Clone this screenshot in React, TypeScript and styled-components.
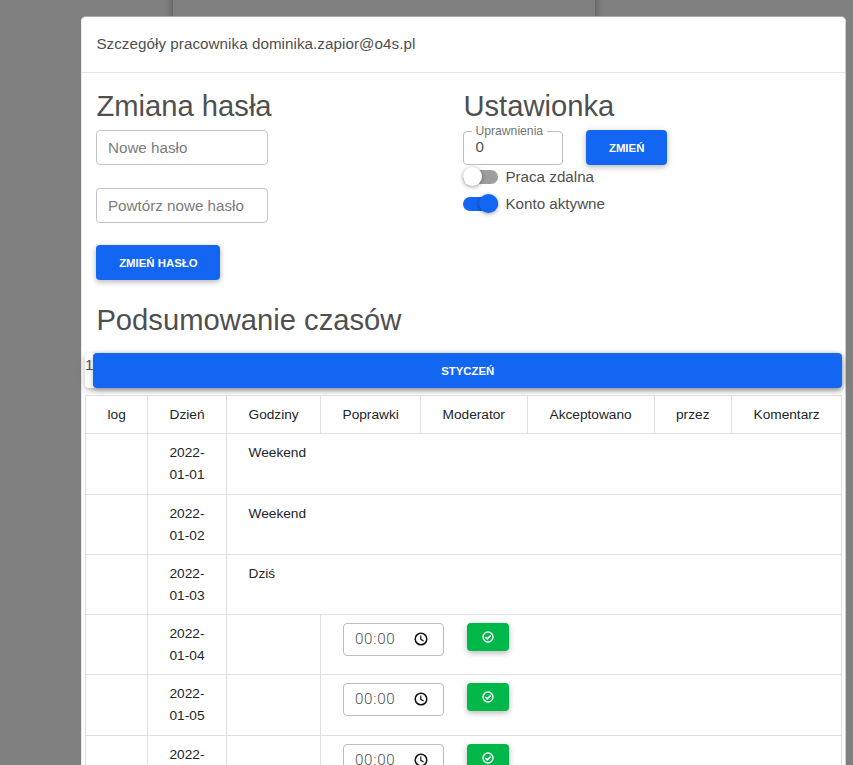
import React from "react";
import styled, { createGlobalStyle, css } from "styled-components";

const Global = createGlobalStyle`
  * { box-sizing: border-box; }
  html, body { margin: 0; height: 765px; overflow: hidden; background: #808080; }
  body { font-family: "Liberation Sans", Arial, sans-serif; font-size: 15.2px; line-height: 24.3px; color: #4f4f4f; }
`;

const Page = styled.div`
  position: relative;
  height: 765px;
  overflow: hidden;
  background: #808080;
`;
const PageCard = styled.div`
  position: absolute;
  left: 173px;
  top: -20px;
  width: 422px;
  height: 900px;
  background: #808080;
  box-shadow: 0 4px 9px rgba(0, 0, 0, 0.25), 0 0 5px rgba(0, 0, 0, 0.15);
`;
const Modal = styled.div`
  position: relative;
  margin: 16px 0 0 81px;
  width: 765px;
  height: 800px;
  background: #fff;
  border: 1px solid #d0d0d0;
  border-top-color: #a8a8a8;
  border-left-color: #e8e8e8;
  border-radius: 5px 5px 0 0;
`;
const ModalHeader = styled.header`
  height: 56px;
  padding: 15px 14.4px;
  border-bottom: 1px solid #e5e5e5;
  letter-spacing: 0.05px;
`;
const Forms = styled.div`
  display: grid;
  grid-template-columns: 367px 1fr;
  height: 227px;
  padding: 16px 14.4px 0;
`;
const Column = styled.section``;
const Title = styled.h2`
  margin: 0;
  height: 41px;
  line-height: 34px;
  font-size: 29.2px;
  font-weight: 400;
`;
const Field = styled.input`
  display: block;
  width: 172px;
  height: 35px;
  margin-bottom: 22.6px;
  padding: 0 10.6px;
  border: 1px solid #c4c4c4;
  border-radius: 4px;
  font: 15.2px "Liberation Sans", Arial, sans-serif;
  color: #4f4f4f;
  &::placeholder { color: #7c7c7c; opacity: 1; }
`;
const raised = css`
  border: 0;
  border-radius: 4px;
  color: #fff;
  box-shadow: 0 2px 5px rgba(0, 0, 0, 0.2), 0 2px 9px rgba(0, 0, 0, 0.1);
`;
const Button = styled.button<{ $width?: number }>`
  ${raised}
  width: ${(p) => (p.$width ? `${p.$width}px` : "auto")};
  height: 34.6px;
  padding: 2px 0 0;
  background: #1266f1;
  font: 700 11.4px/17px "Liberation Sans", Arial, sans-serif;
`;
const RoleRow = styled.div`
  display: flex;
  gap: 22.5px;
`;
const RoleField = styled.fieldset`
  width: 100px;
  height: 40px;
  margin: -5px 0 0;
  padding: 0 11px;
  border: 1px solid #bdbdbd;
  border-radius: 4px;
  min-width: 0;
  line-height: 19px;
`;
const Legend = styled.legend`
  margin-left: -3px;
  padding: 0 4px 0 3px;
  font-size: 12.2px;
  line-height: 12px;
  color: #757575;
  white-space: nowrap;
`;
const Switches = styled.div`
  margin-top: -1.4px;
`;
const SwitchRow = styled.label`
  display: flex;
  align-items: center;
  gap: 7px;
  height: 27px;
`;
const Track = styled.span<{ $on?: boolean }>`
  display: flex;
  align-items: center;
  justify-content: ${(p) => (p.$on ? "flex-end" : "flex-start")};
  width: 35px;
  height: 14px;
  margin-top: -1px;
  border-radius: 7px;
  background: ${(p) => (p.$on ? "#1266f1" : "#9e9e9e")};
`;
const Knob = styled.span<{ $on?: boolean }>`
  width: 19px;
  height: 19px;
  border-radius: 50%;
  background: ${(p) => (p.$on ? "#1266f1" : "#fff")};
  box-shadow: 0 1px 4px rgba(0, 0, 0, 0.4);
`;
const SummaryTitle = styled(Title)`
  height: 53px;
  padding-left: 14.4px;
  line-height: 41px;
`;
const MonthBar = styled.div`
  display: flex;
  width: 757px;
  height: 34.6px;
  margin: 0 0 7.4px 3px;
  border-radius: 4px;
  line-height: 24px;
  box-shadow: 0 2px 5px rgba(0, 0, 0, 0.2), 0 2px 9px rgba(0, 0, 0, 0.1);
  ${Button} { flex: 1; }
`;
const Table = styled.table`
  width: 757px;
  margin-left: 3px;
  table-layout: fixed;
  border-collapse: collapse;
  color: #212529;
  font-size: 13.7px;
  line-height: 22px;
`;
const Cell = styled.td`
  padding: 8px 20px 0 21.5px;
  border: 1px solid #e0e0e0;
  vertical-align: top;
`;
const HeadRow = styled.tr`height: 38px;`;
const DayRow = styled.tr<{ $height: number }>`height: ${(p) => p.$height}px;`;
const EditLine = styled.div`
  display: flex;
  align-items: flex-start;
  gap: 23px;
  margin-left: 0.5px;
`;
const TimeField = styled.div`
  display: flex;
  align-items: center;
  justify-content: space-between;
  width: 101px;
  height: 33px;
  padding: 0 15px 0 11px;
  border: 1px solid #bdbdbd;
  border-radius: 4px;
  color: #4f4f4f;
  font: 15.2px Roboto, sans-serif;
  font-weight: 300;
  letter-spacing: 0.7px;
`;
const Accept = styled.button`
  ${raised}
  display: flex;
  align-items: center;
  justify-content: center;
  width: 42px;
  height: 28px;
  padding: 0;
  background: #00b74a;
`;

const Clock = () => (
  <svg width="14" height="14" viewBox="0 0 14 14" fill="none" stroke="#111" strokeWidth="1.5">
    <circle cx="7" cy="7" r="5.8" />
    <path d="M6.8 3.4V7.3L9.6 9" strokeWidth="1.2" />
  </svg>
);
const CheckCircle = () => (
  <svg width="12" height="12" viewBox="0 0 12 12" fill="none" stroke="#fff" strokeWidth="1.4">
    <circle cx="6" cy="6" r="5" />
    <path d="M3.4 6.1L5.3 7.9L8.7 4.5" strokeWidth="1.7" />
  </svg>
);

const columns = [
  ["log", 62],
  ["Dzień", 79],
  ["Godziny", 94],
  ["Poprawki", 100],
  ["Moderator", 107],
  ["Akceptowano", 126.5],
  ["przez", 77.5],
  ["Komentarz", 110],
] as const;

const days = [
  { day: "01", note: "Weekend", height: 61 },
  { day: "02", note: "Weekend", height: 60 },
  { day: "03", note: "Dziś", height: 60 },
  { day: "04", height: 60 },
  { day: "05", height: 61 },
  { day: "06", height: 60 },
];

export default function App() {
  return (
    <Page>
      <Global />
      <PageCard />
      <Modal>
        <ModalHeader>Szczegóły pracownika dominika.zapior@o4s.pl</ModalHeader>
        <Forms>
          <Column>
            <Title>Zmiana hasła</Title>
            <Field placeholder="Nowe hasło" />
            <Field placeholder="Powtórz nowe hasło" />
            <Button $width={124}>ZMIEŃ HASŁO</Button>
          </Column>
          <Column>
            <Title>Ustawionka</Title>
            <RoleRow>
              <RoleField>
                <Legend>Uprawnienia</Legend>
                0
              </RoleField>
              <Button $width={81.5}>ZMIEŃ</Button>
            </RoleRow>
            <Switches>
              <SwitchRow><Track><Knob /></Track>Praca zdalna</SwitchRow>
              <SwitchRow><Track $on><Knob $on /></Track>Konto aktywne</SwitchRow>
            </Switches>
          </Column>
        </Forms>
        <SummaryTitle>Podsumowanie czasów</SummaryTitle>
        <MonthBar>1<Button>STYCZEŃ</Button></MonthBar>
        <Table>
          <colgroup>{columns.map(([name, width]) => <col key={name} width={width} />)}</colgroup>
          <tbody>
            <HeadRow>{columns.map(([name]) => <Cell key={name}>{name}</Cell>)}</HeadRow>
            {days.map(({ day, note, height }) => (
              <DayRow key={day} $height={height}>
                <Cell />
                <Cell>2022-<br />01-{day}</Cell>
                {note ? <Cell colSpan={6}>{note}</Cell> : (
                  <>
                    <Cell />
                    <Cell colSpan={5}>
                      <EditLine>
                        <TimeField>00:00<Clock /></TimeField>
                        <Accept><CheckCircle /></Accept>
                      </EditLine>
                    </Cell>
                  </>
                )}
              </DayRow>
            ))}
          </tbody>
        </Table>
      </Modal>
    </Page>
  );
}
